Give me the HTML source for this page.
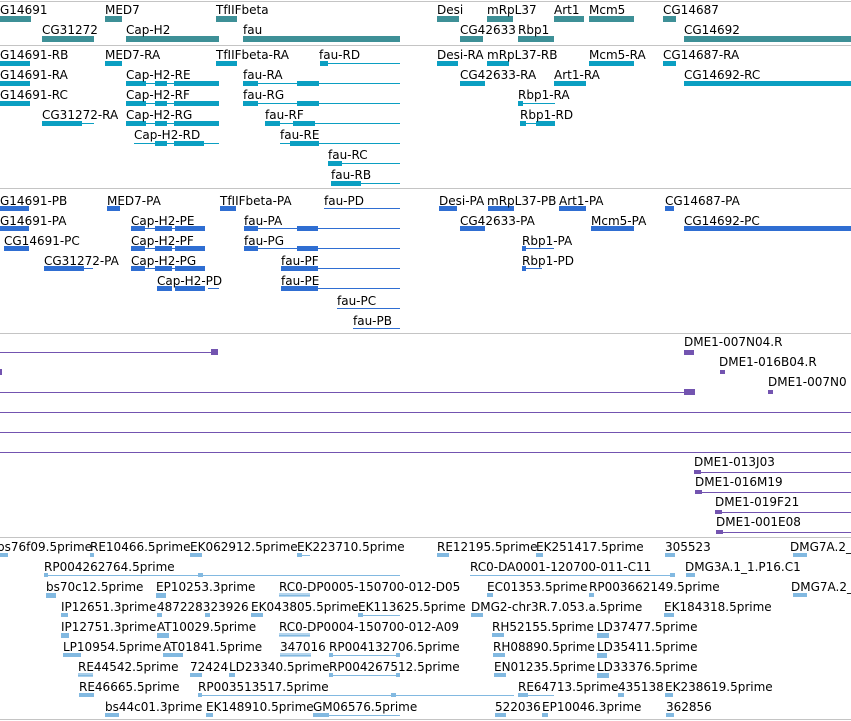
<!DOCTYPE html>
<html><head><meta charset="utf-8"><style>
*{margin:0;padding:0}
body{width:851px;height:721px;background:#fff;position:relative;overflow:hidden;font-family:"DejaVu Sans","Liberation Sans",sans-serif}
.t{position:absolute;font-size:12px;line-height:13px;color:#000;white-space:nowrap;margin-top:2px}
.b{position:absolute;background:currentColor}
.s{position:absolute;left:0;width:851px;height:1px;background:#c4c4c4}
.g{color:#3e9097}.x{color:#0b9fc2}.p{color:#2f6ed2}.u{color:#7354b0}.e{color:#82b9e1}
</style></head><body>
<div class="s" style="top:1px"></div>
<div class="s" style="top:45px"></div>
<div class="s" style="top:188px"></div>
<div class="s" style="top:333px"></div>
<div class="s" style="top:537px"></div>
<div class="s" style="top:719px"></div>

<div class="g">
<div class="b" style="left:0;top:16px;width:31px;height:6px"></div>
<div class="b" style="left:105px;top:16px;width:17px;height:6px"></div>
<div class="b" style="left:216px;top:16px;width:21px;height:6px"></div>
<div class="b" style="left:437px;top:16px;width:22px;height:6px"></div>
<div class="b" style="left:487px;top:16px;width:26px;height:6px"></div>
<div class="b" style="left:554px;top:16px;width:30px;height:6px"></div>
<div class="b" style="left:589px;top:16px;width:45px;height:6px"></div>
<div class="b" style="left:663px;top:16px;width:13px;height:6px"></div>
<div class="b" style="left:42px;top:36px;width:52px;height:6px"></div>
<div class="b" style="left:126px;top:36px;width:93px;height:6px"></div>
<div class="b" style="left:243px;top:36px;width:157px;height:6px"></div>
<div class="b" style="left:460px;top:36px;width:23px;height:6px"></div>
<div class="b" style="left:518px;top:36px;width:36px;height:6px"></div>
<div class="b" style="left:684px;top:36px;width:167px;height:6px"></div>
</div>
<div class="t" style="left:0;top:2px">G14691</div>
<div class="t" style="left:105px;top:2px">MED7</div>
<div class="t" style="left:216px;top:2px">TfIIFbeta</div>
<div class="t" style="left:437px;top:2px">Desi</div>
<div class="t" style="left:487px;top:2px">mRpL37</div>
<div class="t" style="left:554px;top:2px">Art1</div>
<div class="t" style="left:589px;top:2px">Mcm5</div>
<div class="t" style="left:663px;top:2px">CG14687</div>
<div class="t" style="left:42px;top:22px">CG31272</div>
<div class="t" style="left:126px;top:22px">Cap-H2</div>
<div class="t" style="left:243px;top:22px">fau</div>
<div class="t" style="left:460px;top:22px">CG42633</div>
<div class="t" style="left:518px;top:22px">Rbp1</div>
<div class="t" style="left:684px;top:22px">CG14692</div>

<div class="x">
<div class="b" style="left:0;top:61px;width:30px;height:5px"></div>
<div class="b" style="left:105px;top:61px;width:17px;height:5px"></div>
<div class="b" style="left:216px;top:61px;width:21px;height:5px"></div>
<div class="b" style="left:320px;top:63px;width:80px;height:1px"></div><div class="b" style="left:320px;top:61px;width:8px;height:5px"></div>
<div class="b" style="left:437px;top:61px;width:21px;height:5px"></div>
<div class="b" style="left:487px;top:61px;width:22px;height:5px"></div>
<div class="b" style="left:589px;top:61px;width:45px;height:5px"></div>
<div class="b" style="left:663px;top:61px;width:13px;height:5px"></div>

<div class="b" style="left:0;top:81px;width:30px;height:5px"></div>
<div class="b" style="left:126px;top:83px;width:93px;height:1px"></div><div class="b" style="left:126px;top:81px;width:20px;height:5px"></div><div class="b" style="left:155px;top:81px;width:12px;height:5px"></div><div class="b" style="left:174px;top:81px;width:45px;height:5px"></div>
<div class="b" style="left:243px;top:83px;width:157px;height:1px"></div><div class="b" style="left:243px;top:81px;width:15px;height:5px"></div><div class="b" style="left:297px;top:81px;width:22px;height:5px"></div>
<div class="b" style="left:460px;top:81px;width:25px;height:5px"></div>
<div class="b" style="left:554px;top:81px;width:32px;height:5px"></div>
<div class="b" style="left:684px;top:81px;width:167px;height:5px"></div>

<div class="b" style="left:0;top:101px;width:30px;height:5px"></div>
<div class="b" style="left:126px;top:103px;width:93px;height:1px"></div><div class="b" style="left:126px;top:101px;width:20px;height:5px"></div><div class="b" style="left:155px;top:101px;width:12px;height:5px"></div><div class="b" style="left:174px;top:101px;width:45px;height:5px"></div>
<div class="b" style="left:243px;top:103px;width:157px;height:1px"></div><div class="b" style="left:243px;top:101px;width:15px;height:5px"></div><div class="b" style="left:297px;top:101px;width:22px;height:5px"></div>
<div class="b" style="left:518px;top:103px;width:37px;height:1px"></div><div class="b" style="left:518px;top:101px;width:5px;height:5px"></div>

<div class="b" style="left:42px;top:123px;width:52px;height:1px"></div><div class="b" style="left:42px;top:121px;width:40px;height:5px"></div>
<div class="b" style="left:126px;top:123px;width:93px;height:1px"></div><div class="b" style="left:126px;top:121px;width:20px;height:5px"></div><div class="b" style="left:155px;top:121px;width:12px;height:5px"></div><div class="b" style="left:174px;top:121px;width:45px;height:5px"></div>
<div class="b" style="left:265px;top:123px;width:135px;height:1px"></div><div class="b" style="left:265px;top:121px;width:15px;height:5px"></div><div class="b" style="left:293px;top:121px;width:22px;height:5px"></div>
<div class="b" style="left:520px;top:123px;width:35px;height:1px"></div><div class="b" style="left:520px;top:121px;width:6px;height:5px"></div><div class="b" style="left:536px;top:121px;width:19px;height:5px"></div>

<div class="b" style="left:134px;top:143px;width:85px;height:1px"></div><div class="b" style="left:155px;top:141px;width:12px;height:5px"></div><div class="b" style="left:174px;top:141px;width:30px;height:5px"></div>
<div class="b" style="left:280px;top:143px;width:120px;height:1px"></div><div class="b" style="left:290px;top:141px;width:29px;height:5px"></div>
<div class="b" style="left:328px;top:163px;width:72px;height:1px"></div><div class="b" style="left:328px;top:161px;width:14px;height:5px"></div>
<div class="b" style="left:331px;top:183px;width:69px;height:1px"></div><div class="b" style="left:331px;top:181px;width:30px;height:5px"></div>
</div>
<div class="t" style="left:0;top:47px">G14691-RB</div>
<div class="t" style="left:105px;top:47px">MED7-RA</div>
<div class="t" style="left:216px;top:47px">TfIIFbeta-RA</div>
<div class="t" style="left:319px;top:47px">fau-RD</div>
<div class="t" style="left:437px;top:47px">Desi-RA</div>
<div class="t" style="left:487px;top:47px">mRpL37-RB</div>
<div class="t" style="left:589px;top:47px">Mcm5-RA</div>
<div class="t" style="left:663px;top:47px">CG14687-RA</div>
<div class="t" style="left:0;top:67px">G14691-RA</div>
<div class="t" style="left:126px;top:67px">Cap-H2-RE</div>
<div class="t" style="left:243px;top:67px">fau-RA</div>
<div class="t" style="left:460px;top:67px">CG42633-RA</div>
<div class="t" style="left:554px;top:67px">Art1-RA</div>
<div class="t" style="left:684px;top:67px">CG14692-RC</div>
<div class="t" style="left:0;top:87px">G14691-RC</div>
<div class="t" style="left:126px;top:87px">Cap-H2-RF</div>
<div class="t" style="left:243px;top:87px">fau-RG</div>
<div class="t" style="left:518px;top:87px">Rbp1-RA</div>
<div class="t" style="left:42px;top:107px">CG31272-RA</div>
<div class="t" style="left:126px;top:107px">Cap-H2-RG</div>
<div class="t" style="left:265px;top:107px">fau-RF</div>
<div class="t" style="left:520px;top:107px">Rbp1-RD</div>
<div class="t" style="left:134px;top:127px">Cap-H2-RD</div>
<div class="t" style="left:280px;top:127px">fau-RE</div>
<div class="t" style="left:328px;top:147px">fau-RC</div>
<div class="t" style="left:331px;top:167px">fau-RB</div>

<div class="p">
<div class="b" style="left:0;top:206px;width:29px;height:5px"></div>
<div class="b" style="left:107px;top:206px;width:13px;height:5px"></div>
<div class="b" style="left:220px;top:206px;width:16px;height:5px"></div>
<div class="b" style="left:324px;top:208px;width:76px;height:1px"></div>
<div class="b" style="left:439px;top:206px;width:18px;height:5px"></div>
<div class="b" style="left:488px;top:206px;width:26px;height:5px"></div>
<div class="b" style="left:559px;top:206px;width:27px;height:5px"></div>
<div class="b" style="left:665px;top:206px;width:9px;height:5px"></div>

<div class="b" style="left:0;top:226px;width:29px;height:5px"></div>
<div class="b" style="left:131px;top:228px;width:74px;height:1px"></div><div class="b" style="left:131px;top:226px;width:14px;height:5px"></div><div class="b" style="left:155px;top:226px;width:17px;height:5px"></div><div class="b" style="left:175px;top:226px;width:30px;height:5px"></div>
<div class="b" style="left:244px;top:228px;width:156px;height:1px"></div><div class="b" style="left:244px;top:226px;width:14px;height:5px"></div><div class="b" style="left:297px;top:226px;width:21px;height:5px"></div>
<div class="b" style="left:460px;top:226px;width:25px;height:5px"></div>
<div class="b" style="left:591px;top:226px;width:43px;height:5px"></div>
<div class="b" style="left:684px;top:226px;width:167px;height:5px"></div>

<div class="b" style="left:4px;top:246px;width:25px;height:5px"></div>
<div class="b" style="left:131px;top:248px;width:74px;height:1px"></div><div class="b" style="left:131px;top:246px;width:14px;height:5px"></div><div class="b" style="left:155px;top:246px;width:17px;height:5px"></div><div class="b" style="left:175px;top:246px;width:30px;height:5px"></div>
<div class="b" style="left:244px;top:248px;width:156px;height:1px"></div><div class="b" style="left:244px;top:246px;width:14px;height:5px"></div><div class="b" style="left:297px;top:246px;width:21px;height:5px"></div>
<div class="b" style="left:522px;top:248px;width:32px;height:1px"></div><div class="b" style="left:522px;top:246px;width:4px;height:5px"></div>

<div class="b" style="left:44px;top:268px;width:49px;height:1px"></div><div class="b" style="left:44px;top:266px;width:40px;height:5px"></div>
<div class="b" style="left:131px;top:268px;width:74px;height:1px"></div><div class="b" style="left:131px;top:266px;width:14px;height:5px"></div><div class="b" style="left:155px;top:266px;width:17px;height:5px"></div><div class="b" style="left:175px;top:266px;width:30px;height:5px"></div>
<div class="b" style="left:281px;top:268px;width:119px;height:1px"></div><div class="b" style="left:281px;top:266px;width:37px;height:5px"></div>
<div class="b" style="left:522px;top:268px;width:20px;height:1px"></div><div class="b" style="left:522px;top:266px;width:4px;height:5px"></div>

<div class="b" style="left:157px;top:286px;width:15px;height:5px"></div><div class="b" style="left:175px;top:286px;width:30px;height:5px"></div><div class="b" style="left:208px;top:288px;width:11px;height:1px"></div>
<div class="b" style="left:281px;top:288px;width:119px;height:1px"></div><div class="b" style="left:281px;top:286px;width:37px;height:5px"></div>
<div class="b" style="left:337px;top:308px;width:63px;height:1px"></div>
<div class="b" style="left:353px;top:328px;width:47px;height:1px"></div>
</div>
<div class="t" style="left:0;top:193px">G14691-PB</div>
<div class="t" style="left:107px;top:193px">MED7-PA</div>
<div class="t" style="left:220px;top:193px">TfIIFbeta-PA</div>
<div class="t" style="left:324px;top:193px">fau-PD</div>
<div class="t" style="left:439px;top:193px">Desi-PA</div>
<div class="t" style="left:487px;top:193px">mRpL37-PB</div>
<div class="t" style="left:559px;top:193px">Art1-PA</div>
<div class="t" style="left:665px;top:193px">CG14687-PA</div>
<div class="t" style="left:0;top:213px">G14691-PA</div>
<div class="t" style="left:131px;top:213px">Cap-H2-PE</div>
<div class="t" style="left:244px;top:213px">fau-PA</div>
<div class="t" style="left:460px;top:213px">CG42633-PA</div>
<div class="t" style="left:591px;top:213px">Mcm5-PA</div>
<div class="t" style="left:684px;top:213px">CG14692-PC</div>
<div class="t" style="left:4px;top:233px">CG14691-PC</div>
<div class="t" style="left:131px;top:233px">Cap-H2-PF</div>
<div class="t" style="left:244px;top:233px">fau-PG</div>
<div class="t" style="left:522px;top:233px">Rbp1-PA</div>
<div class="t" style="left:44px;top:253px">CG31272-PA</div>
<div class="t" style="left:131px;top:253px">Cap-H2-PG</div>
<div class="t" style="left:281px;top:253px">fau-PF</div>
<div class="t" style="left:522px;top:253px">Rbp1-PD</div>
<div class="t" style="left:157px;top:273px">Cap-H2-PD</div>
<div class="t" style="left:281px;top:273px">fau-PE</div>
<div class="t" style="left:337px;top:293px">fau-PC</div>
<div class="t" style="left:353px;top:313px">fau-PB</div>

<div class="u">
<div class="b" style="left:0;top:352px;width:218px;height:1px"></div><div class="b" style="left:211px;top:349px;width:7px;height:6px"></div>
<div class="b" style="left:684px;top:350px;width:10px;height:5px"></div>
<div class="b" style="left:0;top:369px;width:2px;height:6px"></div>
<div class="b" style="left:720px;top:370px;width:5px;height:4px"></div>
<div class="b" style="left:0;top:392px;width:695px;height:1px"></div><div class="b" style="left:684px;top:389px;width:11px;height:6px"></div>
<div class="b" style="left:768px;top:390px;width:5px;height:4px"></div>
<div class="b" style="left:0;top:412px;width:851px;height:1px"></div>
<div class="b" style="left:0;top:432px;width:851px;height:1px"></div>
<div class="b" style="left:0;top:452px;width:851px;height:1px"></div>
<div class="b" style="left:694px;top:472px;width:157px;height:1px"></div><div class="b" style="left:694px;top:470px;width:7px;height:4px"></div>
<div class="b" style="left:695px;top:492px;width:156px;height:1px"></div><div class="b" style="left:695px;top:490px;width:7px;height:4px"></div>
<div class="b" style="left:715px;top:512px;width:136px;height:1px"></div><div class="b" style="left:715px;top:510px;width:7px;height:4px"></div>
<div class="b" style="left:716px;top:532px;width:135px;height:1px"></div><div class="b" style="left:716px;top:530px;width:7px;height:4px"></div>
</div>
<div class="t" style="left:684px;top:334px">DME1-007N04.R</div>
<div class="t" style="left:719px;top:354px">DME1-016B04.R</div>
<div class="t" style="left:768px;top:374px">DME1-007N0</div>
<div class="t" style="left:694px;top:454px">DME1-013J03</div>
<div class="t" style="left:695px;top:474px">DME1-016M19</div>
<div class="t" style="left:715px;top:494px">DME1-019F21</div>
<div class="t" style="left:716px;top:514px">DME1-001E08</div>

<div class="e">
<div class="b" style="left:0;top:553px;width:8px;height:4px"></div>
<div class="b" style="left:90px;top:553px;width:4px;height:4px"></div>
<div class="b" style="left:190px;top:553px;width:12px;height:4px"></div>
<div class="b" style="left:297px;top:555px;width:13px;height:1px"></div><div class="b" style="left:297px;top:553px;width:5px;height:4px"></div>
<div class="b" style="left:437px;top:553px;width:12px;height:4px"></div>
<div class="b" style="left:536px;top:553px;width:7px;height:4px"></div>
<div class="b" style="left:665px;top:553px;width:10px;height:4px"></div>
<div class="b" style="left:793px;top:553px;width:14px;height:4px"></div>
<div class="b" style="left:44px;top:575px;width:356px;height:1px"></div><div class="b" style="left:198px;top:573px;width:5px;height:4px"></div><div class="b" style="left:44px;top:573px;width:4px;height:4px"></div>
<div class="b" style="left:470px;top:575px;width:205px;height:1px"></div><div class="b" style="left:670px;top:573px;width:5px;height:4px"></div>
<div class="b" style="left:686px;top:573px;width:9px;height:4px"></div>
<div class="b" style="left:46px;top:593px;width:10px;height:5px"></div>
<div class="b" style="left:156px;top:593px;width:10px;height:5px"></div>
<div class="b" style="left:279px;top:595px;width:31px;height:1px"></div><div class="b" style="left:279px;top:593px;width:31px;height:4px;opacity:.6"></div>
<div class="b" style="left:487px;top:593px;width:6px;height:4px"></div>
<div class="b" style="left:589px;top:593px;width:5px;height:4px"></div>
<div class="b" style="left:793px;top:593px;width:14px;height:4px"></div>
<div class="b" style="left:61px;top:613px;width:7px;height:4px"></div>
<div class="b" style="left:157px;top:613px;width:5px;height:4px"></div>
<div class="b" style="left:205px;top:613px;width:5px;height:4px"></div>
<div class="b" style="left:251px;top:613px;width:12px;height:4px"></div>
<div class="b" style="left:358px;top:615px;width:42px;height:1px"></div><div class="b" style="left:358px;top:613px;width:5px;height:4px"></div>
<div class="b" style="left:471px;top:613px;width:12px;height:4px"></div>
<div class="b" style="left:664px;top:613px;width:10px;height:4px"></div>
<div class="b" style="left:61px;top:633px;width:8px;height:5px"></div>
<div class="b" style="left:157px;top:633px;width:12px;height:5px"></div>
<div class="b" style="left:279px;top:635px;width:31px;height:1px"></div><div class="b" style="left:279px;top:633px;width:31px;height:4px;opacity:.6"></div>
<div class="b" style="left:492px;top:633px;width:12px;height:4px"></div>
<div class="b" style="left:597px;top:633px;width:12px;height:5px"></div>
<div class="b" style="left:63px;top:653px;width:18px;height:4px"></div>
<div class="b" style="left:163px;top:653px;width:20px;height:4px"></div>
<div class="b" style="left:280px;top:655px;width:31px;height:1px"></div><div class="b" style="left:280px;top:653px;width:31px;height:4px;opacity:.6"></div>
<div class="b" style="left:329px;top:655px;width:71px;height:1px"></div><div class="b" style="left:329px;top:653px;width:4px;height:4px"></div><div class="b" style="left:396px;top:653px;width:4px;height:4px"></div>
<div class="b" style="left:493px;top:653px;width:12px;height:4px"></div>
<div class="b" style="left:597px;top:653px;width:10px;height:5px"></div>
<div class="b" style="left:78px;top:675px;width:15px;height:1px"></div><div class="b" style="left:78px;top:673px;width:15px;height:4px;opacity:.7"></div>
<div class="b" style="left:190px;top:673px;width:12px;height:4px"></div>
<div class="b" style="left:229px;top:673px;width:6px;height:4px"></div>
<div class="b" style="left:329px;top:675px;width:71px;height:1px"></div><div class="b" style="left:329px;top:673px;width:4px;height:4px"></div><div class="b" style="left:396px;top:673px;width:4px;height:4px"></div>
<div class="b" style="left:494px;top:673px;width:12px;height:4px"></div>
<div class="b" style="left:597px;top:673px;width:12px;height:5px"></div>
<div class="b" style="left:79px;top:693px;width:15px;height:4px"></div>
<div class="b" style="left:198px;top:695px;width:316px;height:1px"></div><div class="b" style="left:198px;top:693px;width:4px;height:4px"></div><div class="b" style="left:391px;top:693px;width:5px;height:4px"></div>
<div class="b" style="left:518px;top:695px;width:36px;height:1px"></div><div class="b" style="left:518px;top:693px;width:10px;height:4px"></div>
<div class="b" style="left:618px;top:693px;width:6px;height:4px"></div>
<div class="b" style="left:665px;top:693px;width:8px;height:4px"></div>
<div class="b" style="left:105px;top:713px;width:14px;height:4px"></div>
<div class="b" style="left:206px;top:713px;width:7px;height:4px"></div>
<div class="b" style="left:313px;top:715px;width:87px;height:1px"></div><div class="b" style="left:313px;top:713px;width:16px;height:4px"></div>
<div class="b" style="left:495px;top:713px;width:11px;height:4px"></div>
<div class="b" style="left:542px;top:713px;width:6px;height:4px"></div>
<div class="b" style="left:666px;top:713px;width:8px;height:4px"></div>
</div>
<div class="t" style="left:-3px;top:539px">bs76f09.5prime</div>
<div class="t" style="left:90px;top:539px">RE10466.5prime</div>
<div class="t" style="left:190px;top:539px">EK062912.5prime</div>
<div class="t" style="left:297px;top:539px">EK223710.5prime</div>
<div class="t" style="left:437px;top:539px">RE12195.5prime</div>
<div class="t" style="left:536px;top:539px">EK251417.5prime</div>
<div class="t" style="left:665px;top:539px">305523</div>
<div class="t" style="left:790px;top:539px">DMG7A.2_</div>
<div class="t" style="left:44px;top:559px">RP004262764.5prime</div>
<div class="t" style="left:470px;top:559px">RC0-DA0001-120700-011-C11</div>
<div class="t" style="left:685px;top:559px">DMG3A.1_1.P16.C1</div>
<div class="t" style="left:46px;top:579px">bs70c12.5prime</div>
<div class="t" style="left:156px;top:579px">EP10253.3prime</div>
<div class="t" style="left:279px;top:579px">RC0-DP0005-150700-012-D05</div>
<div class="t" style="left:487px;top:579px">EC01353.5prime</div>
<div class="t" style="left:589px;top:579px">RP003662149.5prime</div>
<div class="t" style="left:791px;top:579px">DMG7A.2_</div>
<div class="t" style="left:61px;top:599px">IP12651.3prime</div>
<div class="t" style="left:157px;top:599px">487228323926</div>
<div class="t" style="left:251px;top:599px">EK043805.5prime</div>
<div class="t" style="left:358px;top:599px">EK113625.5prime</div>
<div class="t" style="left:471px;top:599px">DMG2-chr3R.7.053.a.5prime</div>
<div class="t" style="left:664px;top:599px">EK184318.5prime</div>
<div class="t" style="left:61px;top:619px">IP12751.3prime</div>
<div class="t" style="left:157px;top:619px">AT10029.5prime</div>
<div class="t" style="left:279px;top:619px">RC0-DP0004-150700-012-A09</div>
<div class="t" style="left:492px;top:619px">RH52155.5prime</div>
<div class="t" style="left:597px;top:619px">LD37477.5prime</div>
<div class="t" style="left:63px;top:639px">LP10954.5prime</div>
<div class="t" style="left:163px;top:639px">AT01841.5prime</div>
<div class="t" style="left:280px;top:639px">347016</div>
<div class="t" style="left:329px;top:639px">RP004132706.5prime</div>
<div class="t" style="left:493px;top:639px">RH08890.5prime</div>
<div class="t" style="left:597px;top:639px">LD35411.5prime</div>
<div class="t" style="left:78px;top:659px">RE44542.5prime</div>
<div class="t" style="left:190px;top:659px">72424</div>
<div class="t" style="left:229px;top:659px">LD23340.5prime</div>
<div class="t" style="left:329px;top:659px">RP004267512.5prime</div>
<div class="t" style="left:494px;top:659px">EN01235.5prime</div>
<div class="t" style="left:597px;top:659px">LD33376.5prime</div>
<div class="t" style="left:79px;top:679px">RE46665.5prime</div>
<div class="t" style="left:198px;top:679px">RP003513517.5prime</div>
<div class="t" style="left:518px;top:679px">RE64713.5prime</div>
<div class="t" style="left:618px;top:679px">435138</div>
<div class="t" style="left:665px;top:679px">EK238619.5prime</div>
<div class="t" style="left:105px;top:699px">bs44c01.3prime</div>
<div class="t" style="left:206px;top:699px">EK148910.5prime</div>
<div class="t" style="left:313px;top:699px">GM06576.5prime</div>
<div class="t" style="left:495px;top:699px">522036</div>
<div class="t" style="left:542px;top:699px">EP10046.3prime</div>
<div class="t" style="left:666px;top:699px">362856</div>
</body></html>
